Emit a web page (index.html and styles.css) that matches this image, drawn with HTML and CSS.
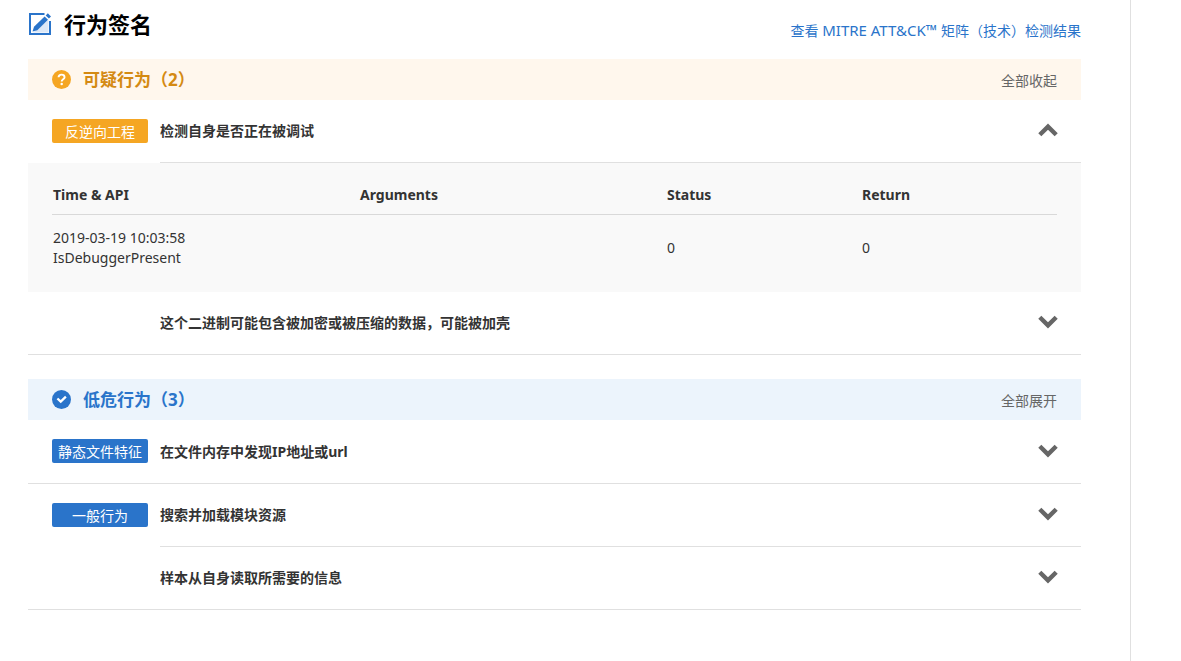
FILE: index.html
```html
<!DOCTYPE html>
<html lang="zh-CN">
<head>
<meta charset="utf-8">
<title>行为签名</title>
<link rel="stylesheet" href="styles.css">
</head>
<body>
<svg class="symbols" aria-hidden="true">
  <symbol id="chevron-down" viewBox="0 0 20 14"><path d="M1.8 2.3 10 10.4 18.2 2.3" fill="none" stroke="currentColor" stroke-width="4.4"/></symbol>
  <symbol id="chevron-up" viewBox="0 0 20 14"><path d="M1.8 11.7 10 3.6 18.2 11.7" fill="none" stroke="currentColor" stroke-width="4.4"/></symbol>
</svg>
<main class="report">
  <header class="report-header">
    <h1 class="report-title">
      <svg class="title-icon" viewBox="0 0 24 24" aria-hidden="true">
        <path d="M5 20.5 20.5 8v12.500z" fill="#dce8f7"/>
        <path d="M16.500 2H2v20h20V9" fill="none" stroke="#2a74ca" stroke-width="2"/>
        <path d="M4.500 19.400 6 14.800 16.600 4.400 20 7.800 9.300 18.200z" fill="#2a74ca"/>
        <path d="M17.700 3.400 19.800 1.300 23 4.500 20.900 6.600z" fill="#2a74ca"/>
      </svg>
      行为签名
    </h1>
    <a class="matrix-link" href="#matrix">查看 <span class="matrix-name">MITRE ATT&amp;CK™</span> 矩阵（技术）检测结果</a>
  </header>

  <section class="section suspicious">
    <div class="band">
      <svg class="band-icon" viewBox="0 0 20 20" aria-hidden="true">
        <circle cx="10" cy="10" r="10" fill="#f5a623"/>
        <path d="M6.900 7.700C7 5.700 8.200 4.900 10 4.900c1.900 0 3.200 1 3.200 2.600 0 2.200-3 2.300-3 4.600" fill="none" stroke="#fff" stroke-width="2"/>
        <circle cx="10.200" cy="14.700" r="1.300" fill="#fff"/>
      </svg>
      <h2 class="band-title">可疑行为（2）</h2>
      <button class="toggle-all" type="button">全部收起</button>
    </div>
    <div class="group">
      <div class="row">
        <div class="tag-cell"><span class="tag">反逆向工程</span></div>
        <div class="row-body">
          <h3 class="row-title">检测自身是否正在被调试</h3>
          <button class="chevron" type="button" aria-label="收起" aria-expanded="true"><svg viewBox="0 0 20 14"><use href="#chevron-up"/></svg></button>
        </div>
      </div>
      <div class="details">
        <table class="calls">
          <thead><tr><th class="wide">Time &amp; API</th><th class="wide">Arguments</th><th class="status">Status</th><th>Return</th></tr></thead>
          <tbody><tr><td>2019-03-19 10:03:58<br>IsDebuggerPresent</td><td></td><td>0</td><td>0</td></tr></tbody>
        </table>
      </div>
      <div class="row">
        <div class="tag-cell"></div>
        <div class="row-body">
          <h3 class="row-title">这个二进制可能包含被加密或被压缩的数据，可能被加壳</h3>
          <button class="chevron" type="button" aria-label="展开" aria-expanded="false"><svg viewBox="0 0 20 14"><use href="#chevron-down"/></svg></button>
        </div>
      </div>
    </div>
  </section>

  <section class="section low-risk">
    <div class="band">
      <svg class="band-icon" viewBox="0 0 20 20" aria-hidden="true">
        <circle cx="10" cy="10" r="10" fill="#2a74ca"/>
        <path d="M5.700 8.900 9.200 12.300 14.600 7" fill="none" stroke="#fff" stroke-width="2.400"/>
      </svg>
      <h2 class="band-title">低危行为（3）</h2>
      <button class="toggle-all" type="button">全部展开</button>
    </div>
    <div class="group">
      <div class="row">
        <div class="tag-cell"><span class="tag">静态文件特征</span></div>
        <div class="row-body">
          <h3 class="row-title">在文件内存中发现IP地址或url</h3>
          <button class="chevron" type="button" aria-label="展开" aria-expanded="false"><svg viewBox="0 0 20 14"><use href="#chevron-down"/></svg></button>
        </div>
      </div>
    </div>
    <div class="group">
      <div class="row">
        <div class="tag-cell"><span class="tag">一般行为</span></div>
        <div class="row-body">
          <h3 class="row-title">搜索并加载模块资源</h3>
          <button class="chevron" type="button" aria-label="展开" aria-expanded="false"><svg viewBox="0 0 20 14"><use href="#chevron-down"/></svg></button>
        </div>
      </div>
      <div class="row">
        <div class="tag-cell"></div>
        <div class="row-body">
          <h3 class="row-title">样本从自身读取所需要的信息</h3>
          <button class="chevron" type="button" aria-label="展开" aria-expanded="false"><svg viewBox="0 0 20 14"><use href="#chevron-down"/></svg></button>
        </div>
      </div>
    </div>
  </section>
</main>
</body>
</html>
```

FILE: styles.css
```css
* {
  box-sizing: border-box;
}

body {
  margin: 0;
  background: #fff;
  color: #333;
  font: 14px/20px "Noto Sans", "Noto Sans CJK SC", sans-serif;
}

h1,
h2,
h3 {
  margin: 0;
}

button {
  padding: 0;
  border: 0;
  background: none;
  font: inherit;
  cursor: pointer;
}

.symbols {
  display: none;
}

.report {
  min-height: 100vh;
  margin-right: 50px;
  padding: 0 49px 24px 28px;
  border-right: 1px solid #e0e0e0;
}

.report-header {
  display: flex;
  justify-content: space-between;
  padding-top: 8px;
  height: 59px;
}

.report-title {
  display: flex;
  align-items: center;
  gap: 12px;
  height: 32px;
  color: #000;
  font-size: 22px;
  line-height: 30px;
}

.title-icon {
  width: 24px;
  height: 24px;
}

.matrix-link {
  padding-top: 12px;
  color: #2a74ca;
  text-decoration: none;
}

.matrix-name {
  font-size: 15px;
}

.section {
  margin-bottom: 24px;
}

.band {
  display: flex;
  align-items: center;
  height: 41px;
  padding: 0 24px;
}

.band-icon {
  width: 19px;
  height: 19px;
  margin-right: 12px;
}

.band-title {
  flex: 1;
  font-size: 17px;
  line-height: 24px;
}

.toggle-all {
  padding-top: 2px;
  color: #666;
}

.suspicious .band {
  background: #fff7ed;
}

.suspicious .band-title {
  color: #d48a13;
}

.low-risk .band {
  background: #ecf4fc;
}

.low-risk .band-title {
  color: #2a74ca;
}

.group {
  min-height: 64px;
  border-bottom: 1px solid #e0e0e0;
}

.row {
  display: flex;
  height: 63px;
}

.row:last-child:not(:first-child) {
  height: 62px;
}

.tag-cell {
  flex: none;
  width: 132px;
  padding: 19px 12px 0 24px;
}

.tag {
  display: block;
  height: 24px;
  border-radius: 2px;
  color: #fff;
  line-height: 25px;
  text-align: center;
}

.suspicious .tag {
  background: #f5a623;
}

.low-risk .tag {
  background: #2a74ca;
}

.row-body {
  display: flex;
  flex: 1;
  align-items: center;
  justify-content: space-between;
  padding-right: 23px;
  border-bottom: 1px solid #e0e0e0;
}

.row:last-child .row-body {
  border-bottom: 0;
}

.row-title {
  font-size: 14px;
  line-height: 20px;
}

.chevron {
  width: 20px;
  height: 16px;
  padding-bottom: 2px;
  color: #666;
}

.chevron svg {
  display: block;
  width: 20px;
  height: 14px;
}

.details {
  padding: 0 24px 11px;
  background: #f9f9f9;
}

.calls {
  width: 100%;
  border-collapse: separate;
  border-spacing: 0;
  table-layout: fixed;
}

.calls th {
  padding: 22px 1px 9px;
  border-bottom: 1px solid #d9d9d9;
  text-align: left;
}

.calls .wide {
  width: 307px;
}

.calls .status {
  width: 195px;
}

.calls td {
  padding: 13px 1px;
}
```
